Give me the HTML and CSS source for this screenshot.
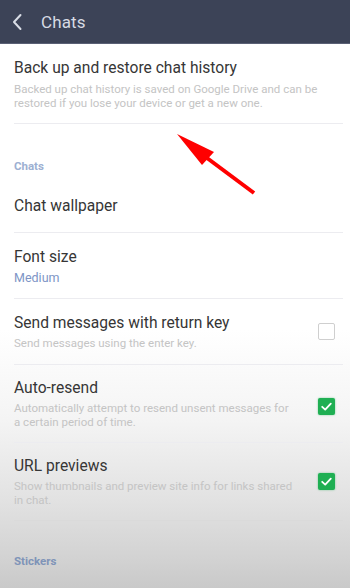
FILE: index.html
```html
<!DOCTYPE html>
<html>
<head>
<meta charset="utf-8">
<link rel="stylesheet" href="styles.css">
</head>
<body>
<div class="screen">
  <header class="topbar">
    <svg class="back" width="12" height="18" viewBox="0 0 12 18"><path d="M9.5 2 L3 9 L9.5 16" fill="none" stroke="#d9dde6" stroke-width="2" stroke-linecap="round" stroke-linejoin="round"/></svg>
    <span class="title">Chats</span>
  </header>
  <div class="list">
    <div class="row r-backup">
      <div class="text">
        <div class="t">Back up and restore chat history</div>
        <div class="s">Backed up chat history is saved on Google Drive and can be restored if you lose your device or get a new one.</div>
      </div>
    </div>
    <div class="section s-chats">Chats</div>
    <div class="row r-wall">
      <div class="text"><div class="t">Chat wallpaper</div></div>
    </div>
    <div class="row r-font">
      <div class="text">
        <div class="t">Font size</div>
        <div class="v">Medium</div>
      </div>
    </div>
    <div class="row r-send">
      <div class="text">
        <div class="t">Send messages with return key</div>
        <div class="s">Send messages using the enter key.</div>
      </div>
      <span class="cb"></span>
    </div>
    <div class="row r-auto">
      <div class="text">
        <div class="t">Auto-resend</div>
        <div class="s">Automatically attempt to resend unsent messages for a certain period of time.</div>
      </div>
      <span class="cb on"><svg width="17" height="17" viewBox="0 0 17 17"><path d="M4.2 8.8 L7.2 11.6 L12.8 5.6" fill="none" stroke="#fff" stroke-width="1.8" stroke-linecap="round" stroke-linejoin="round"/></svg></span>
    </div>
    <div class="row r-url">
      <div class="text">
        <div class="t">URL previews</div>
        <div class="s">Show thumbnails and preview site info for links shared in chat.</div>
      </div>
      <span class="cb on"><svg width="17" height="17" viewBox="0 0 17 17"><path d="M4.2 8.8 L7.2 11.6 L12.8 5.6" fill="none" stroke="#fff" stroke-width="1.8" stroke-linecap="round" stroke-linejoin="round"/></svg></span>
    </div>
    <div class="section s-stickers">Stickers</div>
  </div>
  <svg class="arrow" width="90" height="70" viewBox="0 0 90 70">
    <line x1="30" y1="26" x2="77" y2="61" stroke="#ff0000" stroke-width="4"/>
    <polygon points="0,2 37,20 25,33" fill="#ff0000"/>
  </svg>
</div>
</body>
</html>
```
FILE: styles.css
```css
* { box-sizing: border-box; }
html, body { margin: 0; padding: 0; }
body {
  width: 350px;
  height: 588px;
  overflow: hidden;
  font-family: Roboto, "Noto Sans", Arial, sans-serif;
}
.screen {
  position: relative;
  width: 350px;
  height: 588px;
  background: linear-gradient(to bottom, #ffffff 0px, #ffffff 330px, #f4f4f4 420px, #e2e2e2 500px, #d2d2d2 560px, #c9c9c9 588px);
}
.topbar {
  height: 44px;
  background: #3c4357;
  border-bottom: 1px solid #5a6075;
  display: flex;
  align-items: center;
  padding-left: 11px;
}
.back { display: block; }
.title {
  margin-left: 18px;
  color: #d7dbe4;
  font-size: 17px;
  letter-spacing: 0.1px;
}
.list {
  padding-left: 14px;
  padding-right: 7px;
}
.row {
  display: flex;
  align-items: center;
  border-bottom: 1px solid #ececf0;
}
.text { flex: 1; min-width: 0; }
.t {
  font-size: 15.6px;
  line-height: 20px;
  color: #363636;
}
.s {
  font-size: 11.5px;
  line-height: 14px;
  color: #c4c4c4;
  margin-top: 3px;
}
.v {
  font-size: 12.5px;
  line-height: 14px;
  color: #7d95c6;
  margin-top: 4px;
}
.r-backup { padding: 14px 0 13px 0; }
.r-backup .s { margin-top: 4px; padding-right: 6px; }
.section {
  font-size: 11.5px;
  font-weight: bold;
  line-height: 14px;
  color: #9db0d2;
}
.s-chats { padding-top: 35px; height: 70px; }
.r-wall { height: 52px; margin-top: -13px; padding-bottom: 2px; }
.r-font { padding: 14px 0 13px 0; }
.r-send { padding: 14px 0 14px 0; }
.r-auto { padding: 13px 0 13px 0; }
.r-url { padding: 13px 0 13px 0; border-bottom-color: #dadada; }
.r-auto .s { padding-right: 14px; }
.r-url .s { padding-right: 4px; }
.cb {
  width: 17px;
  height: 17px;
  flex: none;
  margin-left: 12px;
  margin-right: 8px;
  border: 1.5px solid #cfcfcf;
  border-radius: 2px;
  background: #fff;
  position: relative;
}
.cb.on {
  border: none;
  background: #1faf53;
  box-shadow: 0 0 2px rgba(31,175,83,0.6);
}
.cb svg { display: block; }
.r-auto .cb { margin-top: 6px; }
.r-url .cb { margin-top: -1px; }
.s-stickers {
  padding-top: 33px;
  color: #7f94b8;
}
.arrow {
  position: absolute;
  left: 177px;
  top: 132px;
}
```
